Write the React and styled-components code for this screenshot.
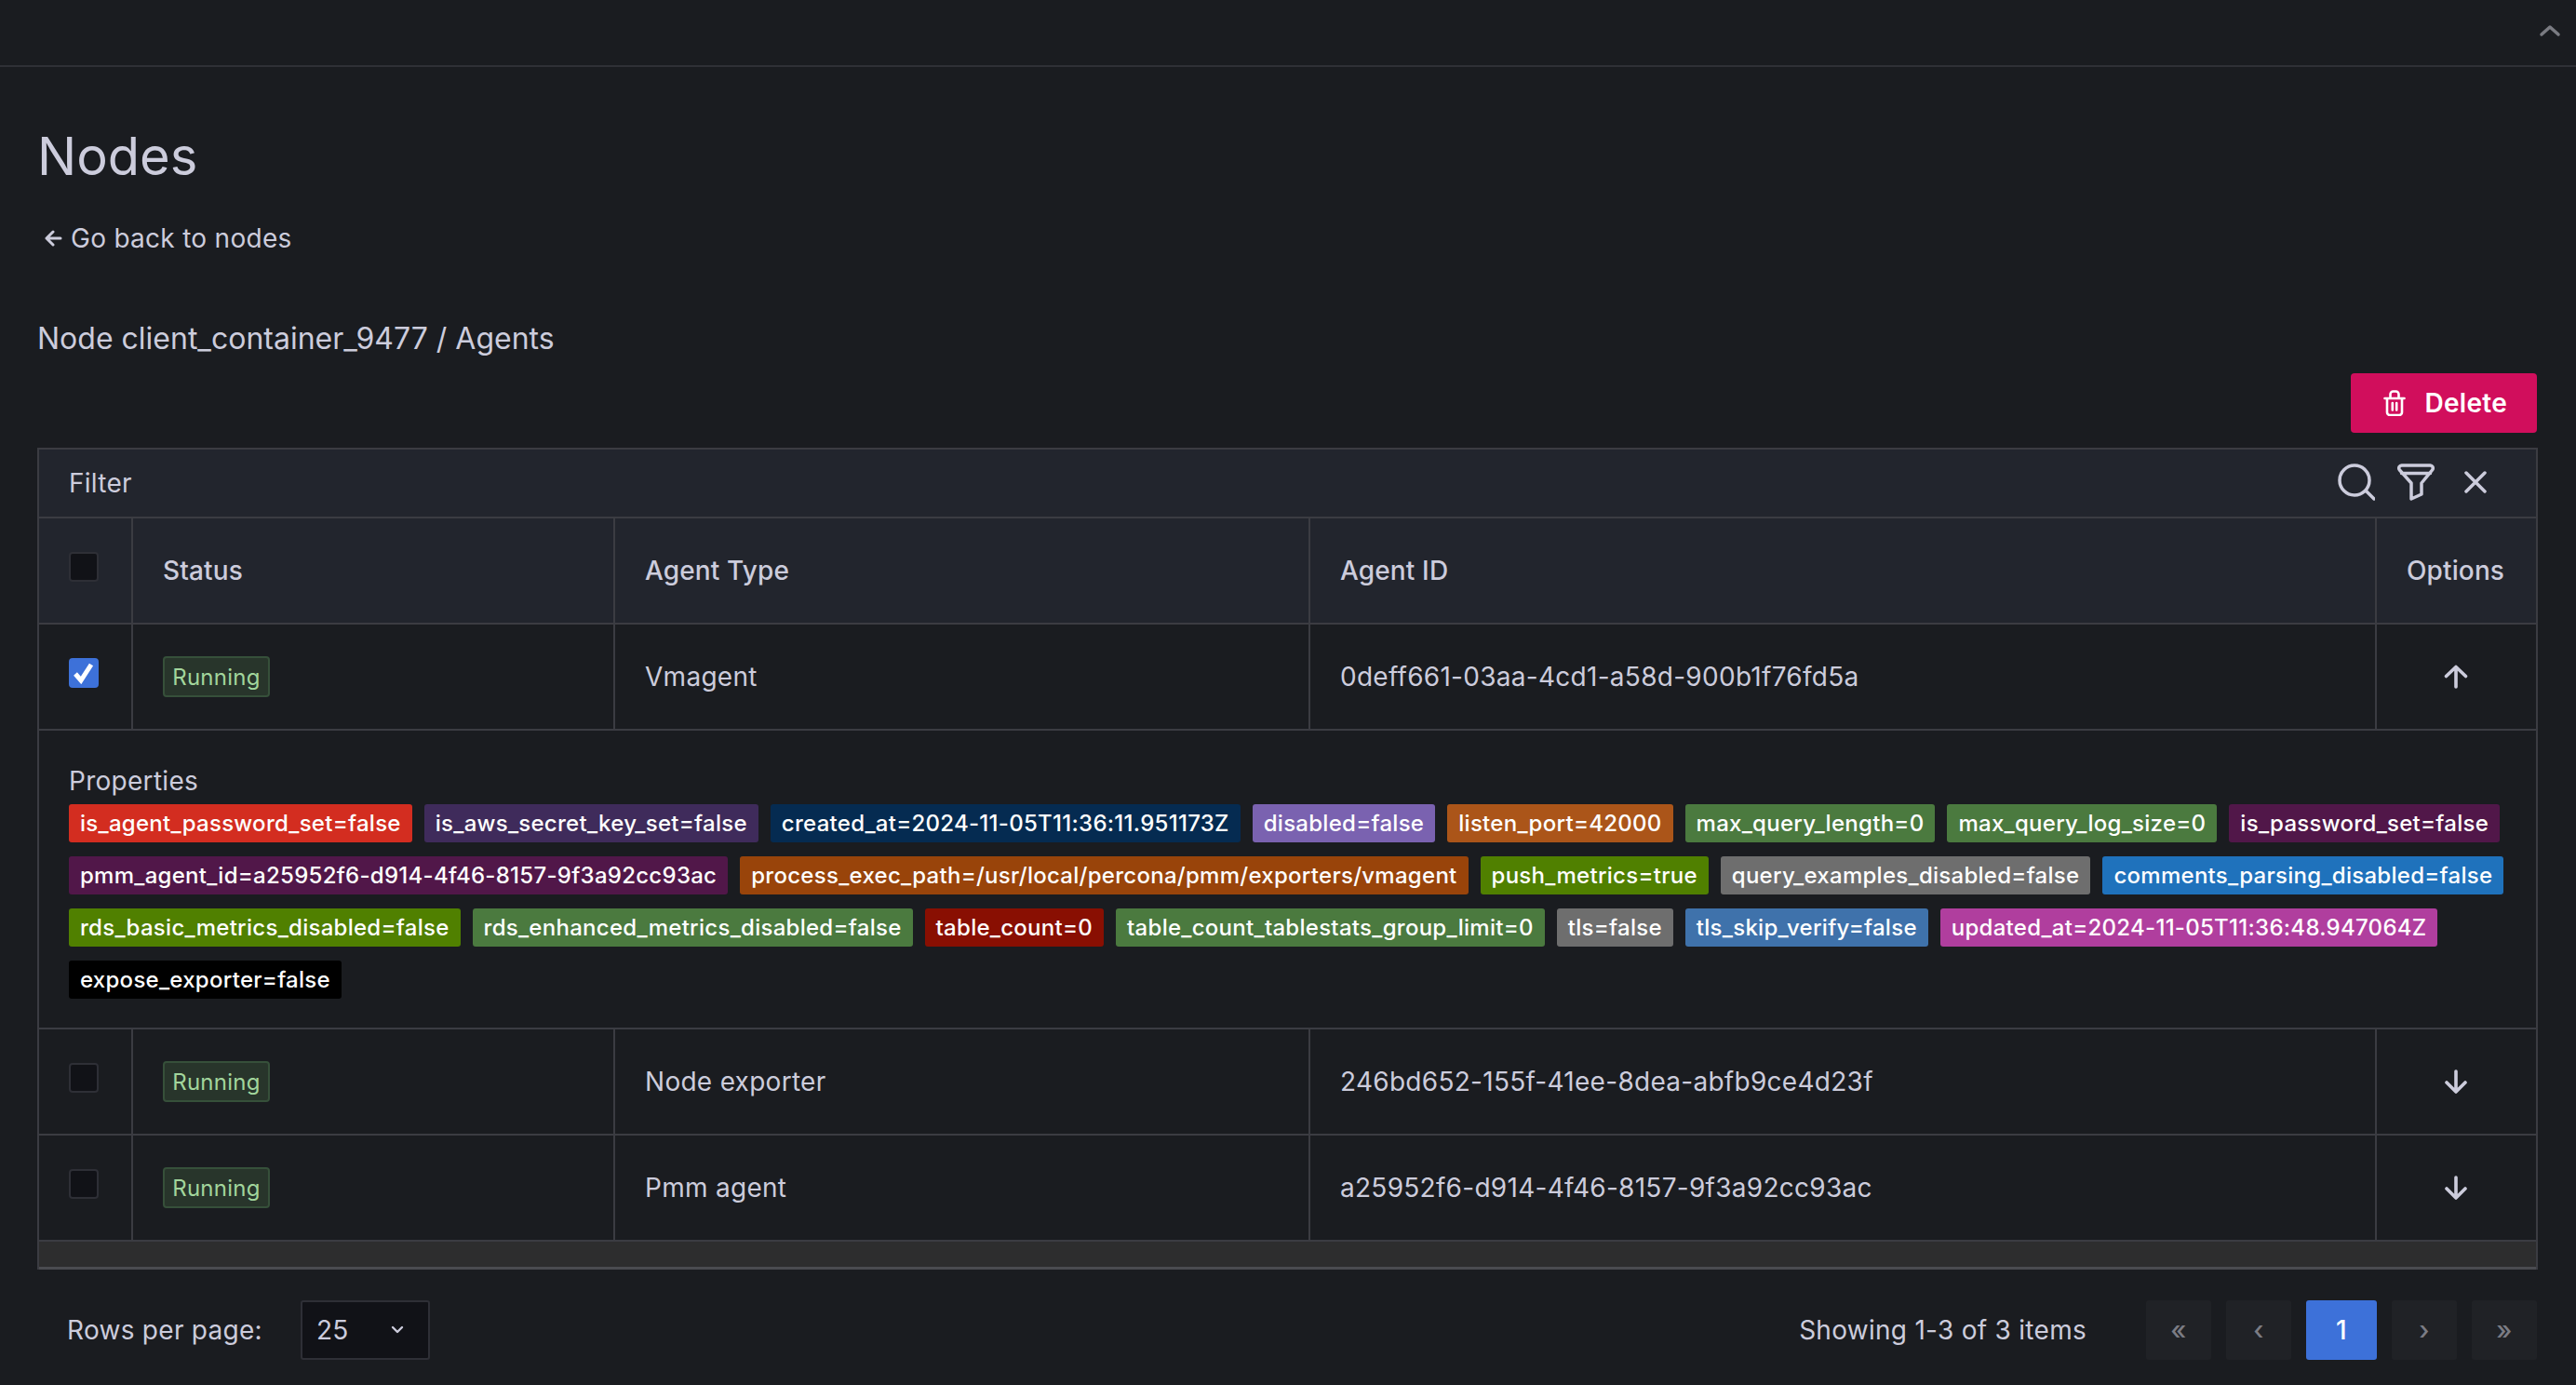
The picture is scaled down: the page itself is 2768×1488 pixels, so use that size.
import React from "react";
import styled, { createGlobalStyle } from "styled-components";

const Global = createGlobalStyle`
  html, body { margin: 0; padding: 0; background: #1a1c20; }
  * { box-sizing: border-box; }
  body { font-family: Inter, "Noto Sans", sans-serif; color: #ccccdc; font-size: 28px; letter-spacing: 0.01em; }
`;

const Page = styled.div`
  width: 2768px;
  height: 1488px;
  overflow: hidden;
  display: flex;
  flex-direction: column;
`;
const TopBar = styled.div`
  height: 72px;
  flex: none;
  border-bottom: 2px solid #2f3036;
  display: flex;
  justify-content: flex-end;
  align-items: flex-start;
  padding: 26px 16px 0 0;
  color: #7a7b82;
`;
const Content = styled.div`
  padding: 0 41px 0 40px;
  display: flex;
  flex-direction: column;
`;
const Title = styled.h1`
  margin: 62px 0 0;
  font-size: 56px;
  line-height: 68px;
  font-weight: 400;
  letter-spacing: 0;
`;
const BackLink = styled.a`
  margin: 36px 0 0 7px;
  display: flex;
  align-items: center;
  gap: 9px;
  font-size: 28px;
  line-height: 36px;
  color: #ccccdc;
`;
const SubTitle = styled.h2`
  margin: 69px 0 0;
  font-size: 32px;
  line-height: 42px;
  font-weight: 400;
  letter-spacing: 0;
`;
const Actions = styled.div`
  margin-top: 16px;
  display: flex;
  justify-content: flex-end;
  padding-right: 1px;
`;
const DangerButton = styled.button`
  width: 200px;
  height: 64px;
  border: 0;
  border-radius: 4px;
  background: #d10e5c;
  color: #fff;
  font: 600 28px Inter, sans-serif;
  letter-spacing: 0.01em;
  display: flex;
  align-items: center;
  justify-content: flex-end;
  gap: 20px;
  padding: 0 32px 0 0;
`;
const TableFrame = styled.div`
  margin-top: 16px;
  border: 2px solid #3b3c42;
  border-bottom: 0;
  width: 2687px;
`;
const FilterBar = styled.div`
  height: 74px;
  background: #22252d;
  display: flex;
  align-items: center;
  justify-content: space-between;
  padding: 0 53px 0 32px;
  border-bottom: 2px solid #3b3c42;
`;
const FilterIcons = styled.div`
  display: flex;
  align-items: center;
  gap: 24px;
  margin-top: -2px;
`;
const CloseSlot = styled.span`
  display: block;
  margin-left: 8px;
`;
const Grid = styled.table`
  width: 2683px;
  table-layout: fixed;
  border-collapse: collapse;
`;
const Head = styled.th`
  height: 113px;
  background: #22252d;
  font-weight: 500;
  font-size: 28px;
  letter-spacing: 0.005em;
  text-align: ${(p) => (p.$center ? "center" : "left")};
  padding: 0 32px;
  border-right: 2px solid #3b3c42;
  border-bottom: 2px solid #3b3c42;
  &:last-child { border-right: 0; padding: 0 2px 0 0; }
`;
const Cell = styled.td`
  height: 114px;
  padding: 0 32px;
  font-size: 28px;
  text-align: ${(p) => (p.$center ? "center" : "left")};
  border-right: 2px solid #3b3c42;
  border-bottom: 2px solid #3b3c42;
  &:last-child { border-right: 0; padding: 0 2px 0 0; }
`;
const CheckCell = styled(Cell)`
  padding: 0 0 8px 32px;
`;
const CheckHead = styled(Head)`
  padding: 0 0 8px 32px;
`;
const Check = styled.span`
  width: 32px;
  height: 32px;
  border-radius: 4px;
  background: ${(p) => (p.$on ? "#3d71d9" : "#111217")};
  border: 2px solid ${(p) => (p.$on ? "#3d71d9" : "#2e2f36")};
  display: flex;
  align-items: center;
  justify-content: center;
`;
const Status = styled.span`
  display: inline-flex;
  align-items: center;
  justify-content: center;
  width: 115px;
  height: 44px;
  border-radius: 4px;
  border: 2px solid #36503a;
  background: #28352b;
  color: #a2d59c;
  font-size: 24px;
  vertical-align: middle;
`;
const ExpandedCell = styled.td`
  padding: 0 32px;
  height: 321px;
  vertical-align: top;
  border-bottom: 2px solid #3b3c42;
`;
const PropLabel = styled.div`
  margin-top: 36px;
  font-size: 28px;
  line-height: 36px;
`;
const TagList = styled.div`
  margin-top: 7px;
  display: flex;
  flex-wrap: wrap;
  gap: 15px 13px;
`;
const Tag = styled.span`
  height: 41px;
  padding: 0 12px;
  border-radius: 3px;
  background: ${(p) => p.$bg};
  color: #fff;
  font-size: 24px;
  font-weight: 500;
  letter-spacing: 0.0115em;
  line-height: 41px;
  white-space: nowrap;
`;
const FooterBar = styled.div`
  height: 32px;
  background: #2d2d2e;
  border-bottom: 3px solid #4a4b50;
  margin-top: -2px;
  border-top: 2px solid #3b3c42;
`;
const Pager = styled.div`
  margin-top: 33px;
  display: flex;
  align-items: center;
  height: 64px;
`;
const RowsLabel = styled.span`
  margin-left: 32px;
  font-size: 28px;
`;
const Select = styled.div`
  margin-left: 41px;
  width: 139px;
  height: 64px;
  background: #111217;
  border: 2px solid #2e2f36;
  border-radius: 3px;
  display: flex;
  align-items: center;
  justify-content: space-between;
  padding: 0 26px 0 15px;
  font-size: 28px;
  color: #ccccdc;
`;
const Showing = styled.span`
  margin-left: auto;
  margin-right: 64px;
  font-size: 28px;
`;
const Pages = styled.div`
  display: flex;
  gap: 16px;
  margin-right: 1px;
`;
const PageBtn = styled.div`
  width: ${(p) => (p.$active ? "76px" : "70px")};
  height: 64px;
  border-radius: 3px;
  background: ${(p) => (p.$active ? "#3d71d9" : "#202226")};
  color: ${(p) => (p.$active ? "#fff" : "#7b7c84")};
  font-weight: 500;
  font-size: 28px;
  display: flex;
  align-items: center;
  justify-content: center;
`;
const Icon = styled.svg`
  display: block;
  flex: none;
  margin: ${(p) => (p.$center ? "0 auto" : "0")};
`;

const Stroke = ({ w, h = w, sw = 3, children, center }) => (
  <Icon $center={center} width={w} height={h} viewBox={`0 0 ${w} ${h}`} fill="none" stroke="currentColor" strokeWidth={sw} strokeLinecap="round" strokeLinejoin="round">
    {children}
  </Icon>
);

const ArrowUp = () => (
  <Stroke w={26} sw={3.6} center>
    <path d="M13 24V3M2.5 12.5 13 2.5l10.5 10" />
  </Stroke>
);
const ArrowDown = () => (
  <Stroke w={26} sw={3.6} center>
    <path d="M13 2v21M3 14l10 10 10-10" />
  </Stroke>
);

const tags = [
  ["is_agent_password_set=false", "#d32d20"],
  ["is_aws_secret_key_set=false", "#3f2b5b"],
  ["created_at=2024-11-05T11:36:11.951173Z", "#052b51"],
  ["disabled=false", "#7a62b0"],
  ["listen_port=42000", "#ab5519"],
  ["max_query_length=0", "#4b7a3f"],
  ["max_query_log_size=0", "#4b7a3f"],
  ["is_password_set=false", "#511749"],
  ["pmm_agent_id=a25952f6-d914-4f46-8157-9f3a92cc93ac", "#511749"],
  ["process_exec_path=/usr/local/percona/pmm/exporters/vmagent", "#99440a"],
  ["push_metrics=true", "#508000"],
  ["query_examples_disabled=false", "#6e6e6e"],
  ["comments_parsing_disabled=false", "#1f72bc"],
  ["rds_basic_metrics_disabled=false", "#508000"],
  ["rds_enhanced_metrics_disabled=false", "#4b7a3f"],
  ["table_count=0", "#890f02"],
  ["table_count_tablestats_group_limit=0", "#4b7a3f"],
  ["tls=false", "#6e6e6e"],
  ["tls_skip_verify=false", "#3f72ab"],
  ["updated_at=2024-11-05T11:36:48.947064Z", "#b03e9e"],
  ["expose_exporter=false", "#000000"],
];

const Row = ({ on, type, id, open }) => (
  <tr>
    <CheckCell>
      <Check $on={on}>
        {on && (
          <svg width="24" height="24" viewBox="0 0 24 24" fill="none" stroke="#fff" strokeWidth="5">
            <path d="M3 13l6 7L20 3" />
          </svg>
        )}
      </Check>
    </CheckCell>
    <Cell><Status>Running</Status></Cell>
    <Cell>{type}</Cell>
    <Cell>{id}</Cell>
    <Cell $center>{open ? <ArrowUp /> : <ArrowDown />}</Cell>
  </tr>
);

export default function App() {
  return (
    <Page>
      <Global />
      <TopBar>
        <Stroke w={24} h={14} sw={3.5}><path d="M3 11 12 3l9 8" /></Stroke>
      </TopBar>
      <Content>
        <Title>Nodes</Title>
        <BackLink>
          <Stroke w={20} sw={3}><path d="M18 10H3M10 3l-7 7 7 7" /></Stroke>
          Go back to nodes
        </BackLink>
        <SubTitle>Node client_container_9477 / Agents</SubTitle>
        <Actions>
          <DangerButton>
            <Stroke w={24} h={28} sw={2.6}>
              <path d="M1.5 9h21M4 9v15a3 3 0 0 0 3 3h10a3 3 0 0 0 3-3V9M7.5 9V4.5a3 3 0 0 1 3-3h3a3 3 0 0 1 3 3V9M9.8 14v7.5M14.2 14v7.5" />
            </Stroke>
            Delete
          </DangerButton>
        </Actions>
        <TableFrame>
          <FilterBar>
            Filter
            <FilterIcons>
              <Stroke w={40} sw={3.5}><circle cx="18" cy="18" r="16" /><path d="M30 29l9 9" /></Stroke>
              <Stroke w={40} sw={3.5}>
                <path d="M5 2h30a3 3 0 0 1 2.5 5L26 21v12l-11 5V21L2.5 7A3 3 0 0 1 5 2zM4.5 10.5h31" />
              </Stroke>
              <CloseSlot>
                <Stroke w={24} sw={3.5}><path d="M2 2l20 20M22 2 2 22" /></Stroke>
              </CloseSlot>
            </FilterIcons>
          </FilterBar>
          <Grid>
            <colgroup>
              <col style={{ width: 100 }} />
              <col style={{ width: 518 }} />
              <col style={{ width: 747 }} />
              <col style={{ width: 1146 }} />
              <col style={{ width: 172 }} />
            </colgroup>
            <thead>
              <tr>
                <CheckHead><Check /></CheckHead>
                <Head>Status</Head>
                <Head>Agent Type</Head>
                <Head>Agent ID</Head>
                <Head $center>Options</Head>
              </tr>
            </thead>
            <tbody>
              <Row on open type="Vmagent" id="0deff661-03aa-4cd1-a58d-900b1f76fd5a" />
              <tr>
                <ExpandedCell colSpan={5}>
                  <PropLabel>Properties</PropLabel>
                  <TagList>
                    {tags.map(([t, c]) => (
                      <Tag key={t} $bg={c}>{t}</Tag>
                    ))}
                  </TagList>
                </ExpandedCell>
              </tr>
              <Row type="Node exporter" id="246bd652-155f-41ee-8dea-abfb9ce4d23f" />
              <Row type="Pmm agent" id="a25952f6-d914-4f46-8157-9f3a92cc93ac" />
            </tbody>
          </Grid>
          <FooterBar />
        </TableFrame>
        <Pager>
          <RowsLabel>Rows per page:</RowsLabel>
          <Select>
            25
            <Stroke w={14} h={10} sw={2.4}><path d="M2 2l5 5 5-5" /></Stroke>
          </Select>
          <Showing>Showing 1-3 of 3 items</Showing>
          <Pages>
            <PageBtn>«</PageBtn>
            <PageBtn>‹</PageBtn>
            <PageBtn $active>1</PageBtn>
            <PageBtn>›</PageBtn>
            <PageBtn>»</PageBtn>
          </Pages>
        </Pager>
      </Content>
    </Page>
  );
}
